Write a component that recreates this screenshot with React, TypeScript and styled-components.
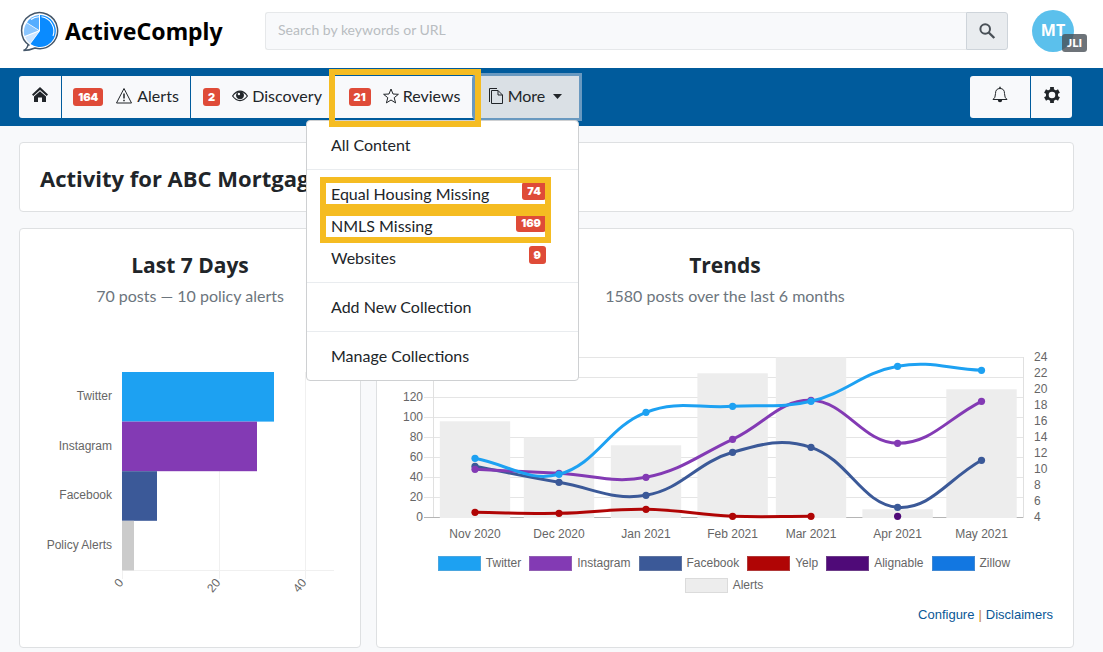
import React from "react";
import styled, { createGlobalStyle, css } from "styled-components";

const BODY_FONT = `Lato, "Open Sans", sans-serif`;
const HEAD_FONT = `"Open Sans", "Noto Sans", sans-serif`;
const CHART_FONT = `"Liberation Sans", Arial, sans-serif`;

const GlobalStyle = createGlobalStyle`
  *, *::before, *::after { box-sizing: border-box; }
  body {
    margin: 0;
    background: #f8f9fb;
    color: #212529;
    font: 16px/24px ${BODY_FONT};
  }
  button, input { font: inherit; color: inherit; }
`;

/* ---------- header ---------- */

const Header = styled.header`
  display: flex;
  align-items: center;
  height: 68px;
  padding: 0 29px 6px 19px;
  background: #fff;
`;

const Brand = styled.a`
  display: flex;
  align-items: center;
  gap: 4px;
  width: 246px;
  flex: none;
  color: #000;
  text-decoration: none;
  font: 700 23px/32px "Noto Sans", sans-serif;
`;

const Search = styled.form`
  display: flex;
  flex: 1;
  height: 38px;
  margin-right: 24px;
`;

const SearchInput = styled.input`
  flex: 1;
  min-width: 0;
  padding: 0 12px 2px;
  border: 1px solid #e6e8ea;
  border-right: 0;
  border-radius: 3px 0 0 3px;
  background: #f8f9fb;
  font-size: 14px;
  &::placeholder { color: #b9bdc1; opacity: 1; }
`;

const SearchButton = styled.button`
  display: grid;
  place-items: center;
  width: 42px;
  padding: 0;
  border: 1px solid #ced4da;
  border-radius: 0 3px 3px 0;
  background: #e9ecef;
  color: #495057;
`;

const Avatar = styled.div`
  position: relative;
  display: grid;
  place-items: center;
  width: 42px;
  height: 42px;
  padding-bottom: 2px;
  border-radius: 50%;
  background: #5bc0ec;
  color: #fff;
  font: 700 16px/24px "Open Sans", sans-serif;
`;

const AvatarTag = styled.span`
  position: absolute;
  left: 30px;
  top: 24px;
  padding: 0 5px;
  border-radius: 3px;
  background: rgba(73, 80, 87, 0.8);
  font: 900 12px/18px ${BODY_FONT};
`;

/* ---------- navigation ---------- */

const Nav = styled.nav`
  display: flex;
  justify-content: space-between;
  padding: 8px 31px 8px 19px;
  background: #005b9c;
`;

const NavGroup = styled.div`
  display: flex;
  gap: 1px;
`;

const NavButton = styled.button<{ $w: number; $active?: boolean }>`
  display: flex;
  align-items: center;
  justify-content: center;
  width: ${(p) => p.$w}px;
  height: 42px;
  padding: 0 0 2px;
  border: 0;
  background: #f8f9fb;
  white-space: nowrap;
  svg { margin-right: 4px; }
  &:first-child { border-radius: 3px 0 0 3px; }
  &:last-child { border-radius: 0 3px 3px 0; }
  ${(p) =>
    p.$active &&
    css`
      padding-right: 4px;
      border-radius: 0 3px 3px 0;
      background: #dae0e5;
      box-shadow: 0 0 0 3px #6999c0;
      svg:last-child { margin: 0 0 0 8px; }
    `}
`;

const IconButton = styled(NavButton)`
  padding-bottom: 4px;
  svg { margin: 0; }
`;

const Badge = styled.span`
  padding: 0 5px;
  border-radius: 3px;
  background: #df4b38;
  color: #fff;
  font: 900 11px/18px Inter, ${BODY_FONT};
`;

const NavBadge = styled(Badge)`
  margin: 2px 12px 0 0;
`;

const MenuAnchor = styled.div`
  position: relative;
`;

const ReviewsAnchor = styled.div`
  position: relative;
  ${NavButton} { border-radius: 0; }
`;

const Callout = styled.span<{ $inset: string }>`
  position: absolute;
  inset: ${(p) => p.$inset};
  z-index: 3;
  border: 6px solid #f5bc22;
  pointer-events: none;
`;

const Menu = styled.ul`
  position: absolute;
  top: 44px;
  right: 0;
  z-index: 2;
  width: 273px;
  margin: 0;
  padding: 8px 0;
  border: 1px solid #ced0d2;
  border-radius: 4px;
  background: #fff;
  list-style: none;
`;

const MenuItem = styled.li`
  position: relative;
`;

const MenuLink = styled.a`
  display: flex;
  justify-content: space-between;
  align-items: flex-start;
  padding: 4px 32px 4px 24px;
  color: #212529;
  text-decoration: none;
`;

const Divider = styled.li`
  height: 1px;
  margin: 8px 0;
  background: #e9ecef;
`;

/* ---------- content ---------- */

const Main = styled.main`
  display: grid;
  gap: 16px;
  padding: 16px 29px 4px 19px;
`;

const Card = styled.section`
  padding: 20px;
  border: 1px solid #dee0e2;
  border-radius: 4px;
  background: #fff;
`;

const TitleCard = styled(Card)`
  padding: 19px 20px 17px;
`;

const Panels = styled.div`
  display: grid;
  grid-template-columns: minmax(0, 342fr) minmax(0, 698fr);
  gap: 15px;
`;

const Heading = styled.h2<{ $center?: boolean }>`
  margin: 0;
  font: 700 ${(p) => (p.$center ? 21 : 22)}px/32px ${HEAD_FONT};
  text-align: ${(p) => (p.$center ? "center" : "left")};
`;

const Subtitle = styled.p`
  margin: 3px 0 40px;
  color: #6c757d;
  text-align: center;
`;

const Chart = styled.svg`
  display: block;
  width: 100%;
  height: auto;
  font: 12px ${CHART_FONT};
  fill: #666;
`;

const Legend = styled.ul`
  display: flex;
  flex-wrap: wrap;
  justify-content: center;
  column-gap: 8px;
  margin: 4px 21px 0 19px;
  padding: 0;
  color: #666;
  font: 12px/22px ${CHART_FONT};
  list-style: none;
`;

const LegendItem = styled.li<{ $color: string }>`
  display: flex;
  align-items: center;
  gap: 5px;
  &::before {
    content: "";
    width: 43px;
    height: 15px;
    border: 1px solid rgba(180, 180, 180, 0.3);
    background: ${(p) => p.$color};
  }
`;

const Links = styled.div`
  display: flex;
  justify-content: flex-end;
  gap: 4px;
  margin-top: 7px;
  color: #c8862a;
  font: 13px/24px ${CHART_FONT};
  a { color: #0a5796; text-decoration: none; }
`;

/* ---------- icons ---------- */

const Logo = () => (
  <svg width="42" height="42" viewBox="0 0 42 42" aria-hidden="true">
    <path d="M10.500 35.500 A18 18 0 1 1 16 38 Q10 40.500 4.500 40.500 Q8.500 38.500 9 34.500" fill="#fff" stroke="#45576a" strokeWidth="1.500" />
    <path d="M21 21 V5 A16 16 0 1 1 11.500 34 Z" fill="#0a8bff" />
    <path d="M20 20 L8 12.500 A16 16 0 0 1 20 5 Z" fill="#55adff" />
    <path d="M19.500 20.500 L5.500 26 A16 16 0 0 1 7.500 13 Z" fill="#8ac6ff" />
    <path d="M20 21.500 L11 33.500 A16 16 0 0 1 6 27 Z" fill="#cfe6ff" />
    <path d="M12 9.500 A14.500 14.500 0 0 1 20 6.800 M22.500 6.800 A14.500 14.500 0 0 1 34 26" fill="none" stroke="#fff" strokeWidth="1.100" />
  </svg>
);

const SearchIcon = () => (
  <svg width="18" height="18" viewBox="0 0 18 18" fill="none" stroke="currentColor">
    <circle cx="7.200" cy="7" r="4.800" strokeWidth="2" />
    <path d="M10.700 10.500 L16.300 16" strokeWidth="2.400" />
  </svg>
);

const HomeIcon = () => (
  <svg width="18" height="18" viewBox="0 0 18 18" fill="currentColor">
    <path d="M9 1 L17 8.400 L15.700 9.900 L9 3.900 L2.300 9.900 L1 8.400 Z" />
    <path d="M9 5.200 L15 10.500 V16 H11 V11.500 H7 V16 H3 V10.500 Z" />
  </svg>
);

const AlertIcon = () => (
  <svg width="18" height="18" viewBox="0 0 18 18" fill="none" stroke="currentColor">
    <path d="M9 1.500 L16.500 16 H1.500 Z" strokeLinejoin="round" />
    <path d="M9 6.500 V11.500 M9 12.800 V14.300" strokeWidth="1.500" />
  </svg>
);

const EyeIcon = () => (
  <svg width="16" height="16" viewBox="0 0 16 16" fill="none" stroke="currentColor">
    <path d="M0.600 8 Q4 3.200 8 3.200 Q12 3.200 15.400 8 Q12 12.600 8 12.600 Q4 12.600 0.600 8 Z" strokeWidth="1.200" />
    <circle cx="8" cy="7.300" r="3.500" fill="currentColor" />
    <circle cx="6.900" cy="6" r="1.200" fill="#f8f9fb" stroke="none" />
  </svg>
);

const StarIcon = () => (
  <svg width="16" height="16" viewBox="0 0 16 16" fill="none" stroke="currentColor">
    <path d="M8 1 L10 6 L15.400 6.300 L11.200 9.700 L12.600 14.900 L8 12 L3.400 14.900 L4.800 9.700 L0.600 6.300 L6 6 Z" />
  </svg>
);

const FilesIcon = () => (
  <svg width="16" height="18" viewBox="0 0 16 18" fill="none" stroke="currentColor">
    <path d="M3.500 3.500 H10 L14.500 8 V16.500 H3.500 Z M10 3.500 V8 H14.500" />
    <path d="M1.500 15 V1.500 H9" />
  </svg>
);

const Caret = () => (
  <svg width="9" height="5" viewBox="0 0 9 5" fill="currentColor">
    <path d="M0 0 H9 L4.500 5 Z" />
  </svg>
);

const BellIcon = () => (
  <svg width="18" height="18" viewBox="0 0 18 18" fill="none" stroke="currentColor">
    <path d="M2 13.500 Q4.500 12 4.500 7.500 Q4.500 2.500 9 2.500 Q13.500 2.500 13.500 7.500 Q13.500 12 16 13.500 Z" strokeLinejoin="round" />
    <path d="M9 0.800 V2.500" strokeWidth="1.500" />
    <path d="M6.800 14 A2.200 2.200 0 0 0 11.200 14 Z" fill="currentColor" stroke="none" />
  </svg>
);

const GearIcon = () => (
  <svg width="18" height="18" viewBox="0 0 18 18" fill="none" stroke="currentColor">
    <circle cx="9" cy="9" r="4.700" strokeWidth="2.800" />
    {[0, 60, 120, 180, 240, 300].map((a) => (
      <path key={a} d="M9 4 V1" strokeWidth="3.800" transform={`rotate(${a} 9 9)`} />
    ))}
  </svg>
);

/* ---------- charts ---------- */

const DAYS = [
  { name: "Twitter", width: 152, color: "#1da1f2" },
  { name: "Instagram", width: 135, color: "#833ab4" },
  { name: "Facebook", width: 35, color: "#3b5998" },
  { name: "Policy Alerts", width: 12, color: "#cbcbcb" },
];

const WeekChart = () => (
  <Chart viewBox="40 348 300 256" role="img" aria-label="Posts in the last 7 days">
    <path d="M219.500 372 V579 M305.500 372 V579 M122.500 571 V579 M122 570.500 H334" stroke="#f0f0f0" fill="none" />
    {DAYS.map((d, i) => (
      <g key={d.name}>
        <rect x="122" y={372 + i * 49.6} width={d.width} height="49.600" fill={d.color} />
        <text x="112" y={400 + i * 49.6} textAnchor="end">{d.name}</text>
      </g>
    ))}
    {[[0, 122], [20, 219], [40, 305]].map(([n, x]) => (
      <text key={n} textAnchor="end" transform={`translate(${x + 2} 583) rotate(-50)`}>{n}</text>
    ))}
  </Chart>
);

const MONTHS = ["Nov 2020", "Dec 2020", "Jan 2021", "Feb 2021", "Mar 2021", "Apr 2021", "May 2021"];
const MONTH_X = [475, 559, 646, 732.6, 811, 897.6, 981.5];
const ALERTS = [16, 14, 13, 22, 24, 5, 20];

const SERIES = [
  { name: "Yelp", color: "#b00505", values: [5, 4, 8, 1, 1] },
  { name: "Facebook", color: "#3b5998", values: [51, 35, 22, 65, 70, 10, 57] },
  { name: "Instagram", color: "#833ab4", values: [48, 44, 40, 78, 117, 74, 116] },
  { name: "Twitter", color: "#1da1f2", values: [59, 43, 105, 111, 116, 151, 147] },
];

const LEGEND = [
  ["Twitter", "#1da1f2"],
  ["Instagram", "#833ab4"],
  ["Facebook", "#3b5998"],
  ["Yelp", "#b00505"],
  ["Alignable", "#4f0a78"],
  ["Zillow", "#1277e1"],
  ["Alerts", "#ededed"],
];

const postY = (v: number) => 517.3 - v;
const alertY = (v: number) => 517.3 - (v - 4) * 8;

// Cubic spline through the points, with handles scaled by the distance to each neighbour.
function spline(values: number[]) {
  const pts = values.map((v, i) => ({ x: MONTH_X[i], y: postY(v) }));
  const clamp = (y: number) => Math.min(517.3, Math.max(357, y));
  const handles = pts.map((p, i) => {
    const prev = pts[i - 1] || p;
    const next = pts[i + 1] || p;
    const a = Math.hypot(p.x - prev.x, p.y - prev.y);
    const b = Math.hypot(next.x - p.x, next.y - p.y);
    const fa = (0.4 * a) / (a + b);
    const fb = (0.4 * b) / (a + b);
    const dx = next.x - prev.x;
    const dy = next.y - prev.y;
    return {
      before: [p.x - fa * dx, clamp(p.y - fa * dy)],
      after: [p.x + fb * dx, clamp(p.y + fb * dy)],
    };
  });
  return pts
    .map((p, i) => (i === 0 ? `M${p.x} ${p.y}` : `C${handles[i - 1].after} ${handles[i].before} ${p.x} ${p.y}`))
    .join(" ");
}

const TrendChart = () => (
  <Chart viewBox="397 348 656 200" role="img" aria-label="Posts over the last 6 months">
    {[0, 20, 40, 60, 80, 100, 120, 140, 160].map((v) => (
      <g key={v}>
        <path d={`M424 ${Math.round(517 - v) + 0.5} H1023`} stroke={v ? "#e5e5e5" : "#b5b5b5"} />
        {v <= 120 && <text x="423" y={521 - v} textAnchor="end">{v}</text>}
      </g>
    ))}
    <path d="M433.500 357 V517 M1023.500 357 V518" stroke="#e0e0e0" />
    {ALERTS.map((v, i) => (
      <rect key={i} x={MONTH_X[i] - 35.2} y={alertY(v)} width="70.400" height={518 - alertY(v)} fill="#ededed" />
    ))}
    {Array.from({ length: 11 }, (_, i) => 4 + i * 2).map((v) => (
      <text key={v} x="1034" y={alertY(v) + 3.4}>{v}</text>
    ))}
    {MONTHS.map((m, i) => (
      <text key={m} x={MONTH_X[i]} y="538" textAnchor="middle">{m}</text>
    ))}
    {SERIES.map((s) => (
      <g key={s.name}>
        <path d={spline(s.values)} fill="none" stroke={s.color} strokeWidth="3" />
        {s.values.map((v, i) => (
          <circle key={i} cx={MONTH_X[i]} cy={postY(v)} r="3.600" fill={s.color} />
        ))}
      </g>
    ))}
    <circle cx={MONTH_X[5]} cy={postY(1)} r="3.600" fill="#4f0a78" />
  </Chart>
);

/* ---------- page ---------- */

export default function App() {
  return (
    <>
      <GlobalStyle />
      <Header>
        <Brand href="#">
          <Logo />
          ActiveComply
        </Brand>
        <Search role="search">
          <SearchInput type="search" aria-label="Search" placeholder="Search by keywords or URL" />
          <SearchButton type="button" aria-label="Search"><SearchIcon /></SearchButton>
        </Search>
        <Avatar>
          MT
          <AvatarTag>JLI</AvatarTag>
        </Avatar>
      </Header>

      <Nav>
        <NavGroup>
          <IconButton $w={42} aria-label="Home"><HomeIcon /></IconButton>
          <NavButton $w={128}><NavBadge>164</NavBadge><AlertIcon />Alerts</NavButton>
          <NavButton $w={143}><NavBadge>2</NavBadge><EyeIcon />Discovery</NavButton>
          <ReviewsAnchor>
            <NavButton $w={139}><NavBadge>21</NavBadge><StarIcon />Reviews</NavButton>
            <Callout $inset="-7px -7px -9px -6px" />
          </ReviewsAnchor>
          <MenuAnchor>
            <NavButton $w={104} $active aria-haspopup="menu" aria-expanded="true">
              <FilesIcon />More<Caret />
            </NavButton>
            <Menu>
              <MenuItem><MenuLink href="#">All Content</MenuLink></MenuItem>
              <Divider />
              <MenuItem>
                <MenuLink href="#">Equal Housing Missing<Badge>74</Badge></MenuLink>
                <Callout $inset="-1px 27px 0 13px" />
              </MenuItem>
              <MenuItem>
                <MenuLink href="#">NMLS Missing<Badge>169</Badge></MenuLink>
                <Callout $inset="0 27px -1px 13px" />
              </MenuItem>
              <MenuItem><MenuLink href="#">Websites<Badge>9</Badge></MenuLink></MenuItem>
              <Divider />
              <MenuItem><MenuLink href="#">Add New Collection</MenuLink></MenuItem>
              <Divider />
              <MenuItem><MenuLink href="#">Manage Collections</MenuLink></MenuItem>
            </Menu>
          </MenuAnchor>
        </NavGroup>
        <NavGroup>
          <IconButton $w={60} aria-label="Notifications"><BellIcon /></IconButton>
          <IconButton $w={41} aria-label="Settings"><GearIcon /></IconButton>
        </NavGroup>
      </Nav>

      <Main>
        <TitleCard><Heading as="h1">Activity for ABC Mortgage</Heading></TitleCard>
        <Panels>
          <Card>
            <Heading $center>Last 7 Days</Heading>
            <Subtitle>70 posts — 10 policy alerts</Subtitle>
            <WeekChart />
          </Card>
          <Card>
            <Heading $center>Trends</Heading>
            <Subtitle>1580 posts over the last 6 months</Subtitle>
            <TrendChart />
            <Legend>
              {LEGEND.map(([name, color]) => (
                <LegendItem key={name} $color={color}>{name}</LegendItem>
              ))}
            </Legend>
            <Links>
              <a href="#">Configure</a>|<a href="#">Disclaimers</a>
            </Links>
          </Card>
        </Panels>
      </Main>
    </>
  );
}
